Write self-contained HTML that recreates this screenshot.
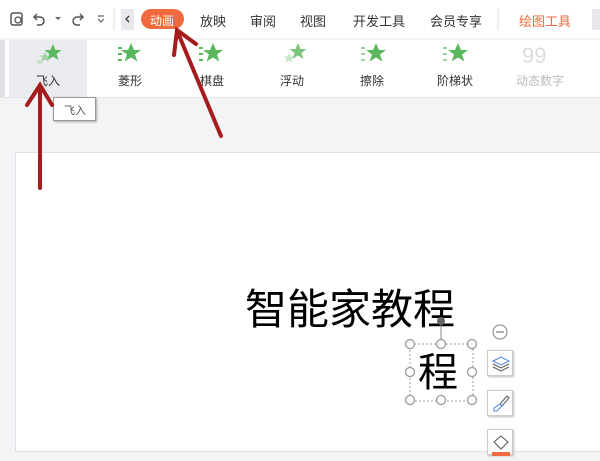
<!DOCTYPE html>
<html><head><meta charset="utf-8"><style>
*{margin:0;padding:0;box-sizing:border-box}
body{width:600px;height:450px;overflow:hidden;background:#f3f4f6;position:relative;font-family:"Liberation Sans","Noto Sans CJK SC",sans-serif;}
.top{position:absolute;left:0;top:0;width:600px;height:38px;background:#fff}
.rib{position:absolute;left:0;top:40px;width:600px;height:58px;background:#fff;border-bottom:1px solid #e2e4e8}
.t{position:absolute;top:11px;font-size:13px;color:#333}
.it{position:absolute;top:72px;font-size:12px;color:#333;width:60px;text-align:center}
.slide{position:absolute;left:15px;top:152px;width:600px;height:300px;background:#fff;border:1px solid #dde0e4}
.btn{position:absolute;left:487px;width:26px;height:26px;background:#fff;border:1px solid #ccc;box-shadow:1px 1px 2px #bbb}
</style></head><body>
<div class="top"></div>
<div class="rib"></div>
<svg style="position:absolute;left:0;top:0" width="600" height="100">
<rect x="11" y="13" width="11" height="12" rx="2" fill="none" stroke="#555" stroke-width="1.5"/><circle cx="18" cy="20" r="3" fill="none" stroke="#555" stroke-width="1.3"/>
<path d="M37 14 l-3 3 3 3 M34 17 h6 a4 4 0 0 1 0 8 h-3" fill="none" stroke="#555" stroke-width="1.5"/>
<path d="M55 17 l3 3 3-3z" fill="#666"/>
<path d="M80 14 l3 3 -3 3 M83 17 h-6 a4 4 0 0 0 0 8 h3" fill="none" stroke="#555" stroke-width="1.5"/>
<path d="M98 16 h6 M98 19 l3 3 3-3" fill="none" stroke="#666" stroke-width="1.2"/>
<line x1="114" y1="8" x2="114" y2="30" stroke="#ddd"/>
<rect x="121" y="9" width="13" height="21" fill="#e6e8eb"/><path d="M129 16 l-3 3 3 3" fill="none" stroke="#333" stroke-width="1.3"/>
<rect x="141" y="9" width="43" height="20" rx="10" fill="#f06a3f"/>
<line x1="498" y1="8" x2="498" y2="30" stroke="#ddd"/>
<rect x="592" y="9" width="8" height="21" fill="#e6e8eb"/>
<rect x="9" y="40" width="78" height="57" fill="#e9ebee"/><rect x="0" y="40" width="5" height="57" fill="#e0e2e5"/>
<g fill="#5cb85c">
<path d="M53 44 l2.5 6 6 0 -5 4 2 6 -5.5-3.5 -5.5 3.5 2-6 -5-4 6 0z"/><path d="M45 52 l1.5 3.5 4 0 -3 2 1 4 -3.5-2 -3.5 2 1-4 -3-2 4 0z" opacity=".5"/><path d="M40 58 l1 2.5 3 0 -2 1.5 1 3 -3-2 -3 2 1-3 -2-1.5 3 0z" opacity=".25"/>
<path d="M131 43 l3 7 7 0 -6 4.5 2.5 7 -6.5-4 -6.5 4 2.5-7 -6-4.5 7 0z"/>
<path d="M213 43 l3 7 7 0 -6 4.5 2.5 7 -6.5-4 -6.5 4 2.5-7 -6-4.5 7 0z"/>
<path d="M298 43 l2.5 6 6 0 -5 4 2 6 -5.5-3.5 -5.5 3.5 2-6 -5-4 6 0z" opacity=".8"/><path d="M289 53 l1.5 3.5 4 0 -3 2 1 4 -3.5-2 -3.5 2 1-4 -3-2 4 0z" opacity=".35"/>
<path d="M376 43 l3 7 7 0 -6 4.5 2.5 7 -6.5-4 -6.5 4 2.5-7 -6-4.5 7 0z"/>
<path d="M458 43 l3 7 7 0 -6 4.5 2.5 7 -6.5-4 -6.5 4 2.5-7 -6-4.5 7 0z"/>
<rect x="118" y="47" width="4" height="2"/><rect x="118" y="53" width="4" height="2"/><rect x="118" y="59" width="4" height="2"/>
<rect x="199" y="47" width="4" height="2"/><rect x="199" y="53" width="4" height="2"/><rect x="199" y="59" width="4" height="2"/>
<rect x="361" y="47" width="4" height="2" opacity=".6"/><rect x="361" y="53" width="4" height="2" opacity=".6"/><rect x="361" y="59" width="4" height="2" opacity=".6"/>
<rect x="443" y="47" width="4" height="2" opacity=".6"/><rect x="443" y="53" width="4" height="2" opacity=".6"/><rect x="443" y="59" width="4" height="2" opacity=".6"/>
</g>
<text x="522" y="63" font-size="22" fill="#ddd" font-family="Liberation Sans">99</text>
</svg>
<div class="t" style="left:150px;color:#fff;font-size:12px;top:12px">动画</div>
<div class="t" style="left:200px">放映</div>
<div class="t" style="left:250px">审阅</div>
<div class="t" style="left:300px">视图</div>
<div class="t" style="left:353px">开发工具</div>
<div class="t" style="left:430px">会员专享</div>
<div class="t" style="left:519px;color:#f06a3f">绘图工具</div>
<div class="it" style="left:18px">飞入</div>
<div class="it" style="left:100px">菱形</div>
<div class="it" style="left:182px">棋盘</div>
<div class="it" style="left:262px">浮动</div>
<div class="it" style="left:342px">擦除</div>
<div class="it" style="left:425px">阶梯状</div>
<div class="it" style="left:505px;color:#bbb;width:70px">动态数字</div>
<div style="position:absolute;left:53px;top:97px;width:43px;height:24px;background:#fff;border:1px solid #999;box-shadow:1px 1px 2px #aaa;font-size:11px;color:#555;padding:4px 0 0 10px">飞入</div>
<div class="slide"></div>
<div style="position:absolute;left:245px;top:285px;font-size:42px;color:#000;line-height:50px">智能家教程</div>
<svg style="position:absolute;left:0;top:0" width="600" height="450">
<rect x="410" y="344" width="63" height="57" fill="none" stroke="#999" stroke-dasharray="2 2"/>
<line x1="441" y1="325" x2="441" y2="344" stroke="#888"/><circle cx="441" cy="321" r="4" fill="#666"/>
<g fill="#fff" stroke="#999" stroke-width="1.3">
<circle cx="410" cy="344" r="4.5"/><circle cx="441" cy="344" r="4.5"/><circle cx="472" cy="344" r="4.5"/>
<circle cx="410" cy="372" r="4.5"/><circle cx="472" cy="372" r="4.5"/>
<circle cx="410" cy="400" r="4.5"/><circle cx="441" cy="400" r="4.5"/><circle cx="472" cy="400" r="4.5"/>
<circle cx="500" cy="332" r="7"/></g>
<line x1="496" y1="332" x2="504" y2="332" stroke="#888" stroke-width="1.3"/>
</svg>
<div style="position:absolute;left:418px;top:350px;font-size:40px;line-height:46px">程</div>
<div class="btn" style="top:350px"><svg width="26" height="26"><path d="M5 10 l8-4 8 4 -8 4z" fill="none" stroke="#4a86e8"/><path d="M5 13 l8 4 8-4 M5 16 l8 4 8-4" fill="none" stroke="#555"/></svg></div>
<div class="btn" style="top:390px"><svg width="26" height="26"><path d="M19 5 l2 2 -7 8 -2-2z" fill="none" stroke="#555"/><path d="M12 13 l2 2 -5 5 -3 0 0-3z" fill="none" stroke="#4a86e8"/></svg></div>
<div class="btn" style="top:429px"><svg width="26" height="26"><path d="M6 12 l7-6 7 6 -7 7z" fill="none" stroke="#555"/><rect x="4" y="22" width="18" height="4" fill="#f06a3f"/></svg></div>
<svg style="position:absolute;left:0;top:0" width="600" height="450">
<g stroke="#a51c1c" stroke-width="4" fill="none" stroke-linecap="round">
<line x1="40" y1="188" x2="40" y2="88"/><path d="M27 105 L40 85 L52 105"/>
<line x1="221" y1="136" x2="178" y2="33"/><path d="M174 55 L177 30 L196 44"/>
</g></svg>
</body></html>
